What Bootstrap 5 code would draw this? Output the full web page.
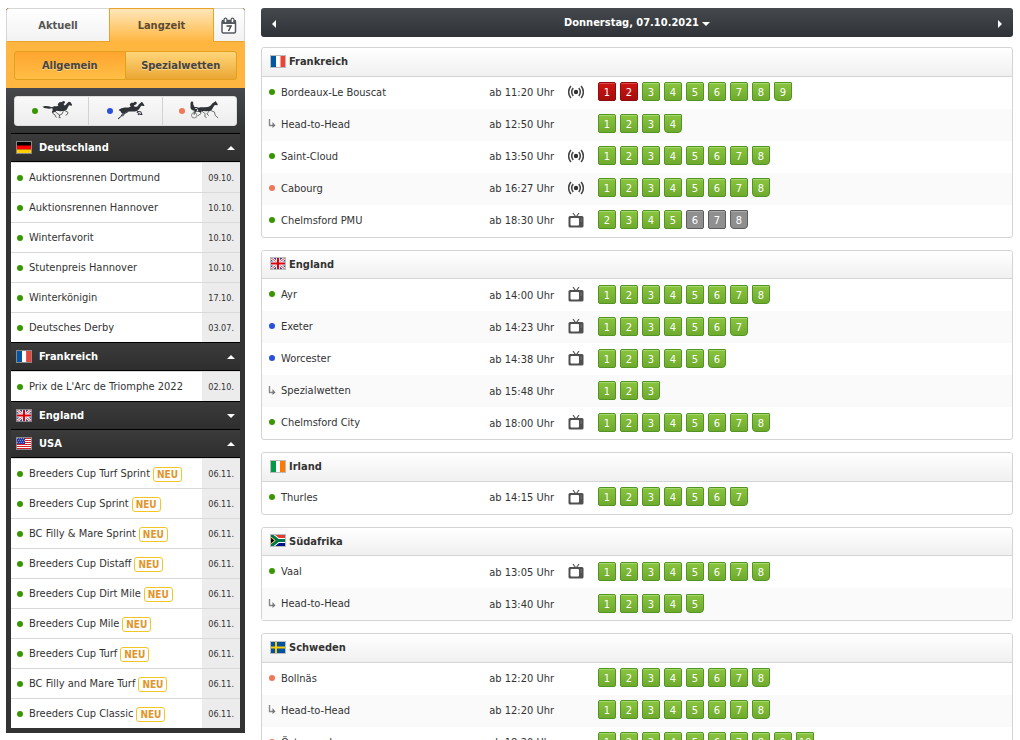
<!DOCTYPE html>
<html lang="de">
<head>
<meta charset="utf-8">
<meta name="viewport" content="width=device-width, initial-scale=1">
<title>Langzeitwetten und Rennkalender</title>
<link href="https://cdn.jsdelivr.net/npm/bootstrap@5.3.0/dist/css/bootstrap.min.css" rel="stylesheet">
<style>
  body { font-family: "DejaVu Sans Condensed", "DejaVu Sans", sans-serif; font-size: 11px; line-height: 1.5; color: #333; background: #fff; }
  a { color: inherit; text-decoration: none; }
  svg { display: block; flex: none; }
  .page { padding: 8px 7px 8px 6px; gap: 16px; }

  /* sidebar */
  .sidebar { flex: 0 0 239px; background: #333; border-radius: 3px 3px 0 0; padding-bottom: 5px; }
  .tabs { height: 34px; background: #ffb640; border-radius: 4px 4px 0 0; overflow: hidden; }
  .tab { border: 1px solid #d6d6d6; border-bottom-color: #e9a32b; background: linear-gradient(#fff, #f2f2f2); color: #555; font-weight: bold; padding: 2px 0 0; }
  .tab-first { flex: 1 1 103px; border-radius: 3px 0 0 0; border-right: 0; }
  .tab-on { flex: 1 1 105px; border-color: #e9a32b; border-bottom: 0; background: linear-gradient(#ffe7ba, #ffb640); color: #5b4b33; }
  .tab-cal { flex: 0 0 31px; border-left: 0; border-radius: 0 3px 0 0; padding: 0; }
  .subnav { background: #ffb640; padding: 9px 8px 8px; }
  .subnav button { height: 29px; border: 1px solid #e3a01f; font-weight: bold; color: #444; text-shadow: 0 1px 0 #ffd88a; padding: 2px 0 0; }
  .sub-on { background: linear-gradient(#ffa52f, #ffbe45); border-radius: 3px 0 0 3px; }
  .sub-off { background: linear-gradient(#ffd67a, #eba634); border-radius: 0 3px 3px 0; border-left: 0 !important; }
  .filter-wrap { background: linear-gradient(#45484c, #333 45px); padding: 8px 8px 7px; }
  .filter { height: 30px; border: 1px solid #ddd; border-radius: 3px; background: linear-gradient(#f9f9f9, #ededed); overflow: hidden; }
  .filter button { flex: 1 1 0; background: none; border: 0; padding: 0 0 2px; gap: 4px; color: #333; }
  .filter button + button { border-left: 1px solid #d2d2d2; }
  .filter .dot { margin-top: 2px; }
  .countries { margin: 0 5px; }
  .country { height: 28px; width: 100%; border: 0; border-top: 1px solid #000; background: linear-gradient(#3b3b3b, #2e2e2e); color: #fff; font-weight: bold; padding: 0 5px; gap: 7px; text-align: left; }
  .country span { padding-top: 2px; }
  .bets { border-top: 1px solid #000; }
  .bet { height: 30px; border-top: 1px solid #d9d9d9; background: #fff; padding-left: 6px; color: #333; }
  .bet-name { padding: 2px 0 0 6px; }
  .bet-date { flex: 0 0 38px; align-self: stretch; background: #ececec; font-size: 9px; padding: 2px 6px 0 0; }
  .neu { border: 1px solid #f3c623; border-radius: 3px; color: #e0962a; font-size: 10px; font-weight: bold; line-height: 13px; padding: 0 3px; margin: 1px 0 0 3px; }

  /* coloured discipline dots */
  .dot { width: 6px; height: 6px; border-radius: 50%; flex: none; display: block; }
  .flat { background: #389700; }
  .jump { background: #2850dc; }
  .trot { background: #f07858; }
  .flag { outline: 1px solid #888; outline-offset: -1px; }
  .panel-head .flag { outline-color: #bbb; margin-bottom: 2px; }

  /* main column */
  .datebar { height: 29px; background: linear-gradient(#45484c, #2f3237); border-radius: 3px; color: #fff; font-weight: bold; margin-bottom: 10px; }
  .datebar button { background: none; border: 0; color: inherit; font-weight: bold; padding: 2px 11px 0; height: 29px; gap: 3px; }
  .panel { border: 1px solid #d4d4d4; border-radius: 3px; margin-bottom: 12px; }
  .panel-head { padding: 6px 8px 5px; background: linear-gradient(#fff, #f0f0f0); border-bottom: 1px solid #d4d4d4; font-size: 11px; font-weight: bold; line-height: 1.5; margin: 0; gap: 3px; border-radius: 3px 3px 0 0; }
  .races { width: 100%; table-layout: fixed; border-collapse: collapse; }
  .races tr { height: 32px; }
  .races tr:nth-child(even) { background: #fafafa; }
  .races td { padding: 0 0 2px; vertical-align: middle; white-space: nowrap; }
  .races .race-time { padding: 2px 0 0; }
  .c-name { width: 192px; }
  .c-time { width: 100px; }
  .c-icon { width: 46px; }
  .races td:nth-child(3) { padding-right: 2px; }
  .race-name { padding-left: 7px; gap: 6px; }
  .race-name span + span, .race-name svg + span { padding-top: 3px; }
  .race-name svg { margin-right: -1px; margin-left: -1px; }
  .nums { gap: 4px; margin-left: -2px; }
  .num { width: 18px; height: 19px; border: 1px solid #539524; border-radius: 2px; background: linear-gradient(#8ac440, #6faa2e); box-shadow: inset 0 1px 0 #a5d86a; color: #fff; line-height: 19px; text-align: center; }
  .num:last-child { border-radius: 1px 1px 4px 4px; }
  .num.done { background: linear-gradient(#cf1512, #a50d0d); border-color: #8c0d0d; box-shadow: inset 0 1px 0 #dc4a48; }
  .num.off { background: #8f8f8f; border-color: #5c5c5c; box-shadow: inset 0 1px 0 #aaa; }
</style>
</head>
<body>

<svg width="0" height="0" class="position-absolute" aria-hidden="true">
  <symbol id="f-de" viewBox="0 0 16 13"><path fill="#000" d="M0 0h16v5H0z"/><path fill="#f00" d="M0 4.500h16v4H0z"/><path fill="#ffce00" d="M0 8.500h16V13H0z"/></symbol>
  <symbol id="f-fr" viewBox="0 0 16 13"><path fill="#0055a4" d="M0 0h6v13H0z"/><path fill="#fff" d="M6 0h4.500v13H6z"/><path fill="#ef4135" d="M10.500 0H16v13h-5.500z"/></symbol>
  <symbol id="f-ie" viewBox="0 0 16 13"><path fill="#009a49" d="M0 0h6v13H0z"/><path fill="#fff" d="M6 0h4v13H6z"/><path fill="#ff7900" d="M10 0h6v13h-6z"/></symbol>
  <symbol id="f-gb" viewBox="0 0 16 13"><path fill="#1b4a96" d="M0 0h16v13H0z"/><path stroke="#fff" stroke-width="2.600" d="M0 0l16 13M16 0L0 13"/><path stroke="#d8000c" stroke-width=".8" d="M0 0l16 13M16 0L0 13"/><path stroke="#fff" stroke-width="4" d="M8 0v13M0 6.500h16"/><path stroke="#d8000c" stroke-width="2.200" d="M8 0v13M0 6.500h16"/></symbol>
  <symbol id="f-us" viewBox="0 0 16 13"><path fill="#fff" d="M0 0h16v13H0z"/><path stroke="#d8202c" d="M0 1.500h16M0 3.500h16M0 5.500h16M0 7.500h16M0 9.500h16M0 11.500h16"/><path fill="#2a3a9c" d="M0 0h9v7H0z"/><path stroke="#aab2e0" stroke-width=".7" stroke-dasharray="1 1" d="M1 1.500h8M2 3.500h7M1 5.500h8"/></symbol>
  <symbol id="f-za" viewBox="0 0 16 13"><path fill="#e03c31" d="M0 0h16v5H0z"/><path fill="#001489" d="M0 8h16v5H0z"/><path fill="none" stroke="#fff" stroke-width="5" d="M0 0l8 6.500h8M0 13l8-6.500"/><path fill="none" stroke="#007749" stroke-width="3" d="M0 0l8 6.500h8M0 13l8-6.500"/><path fill="#000" stroke="#ffb81c" d="M0 2.500l5 4-5 4z"/></symbol>
  <symbol id="f-se" viewBox="0 0 16 13"><path fill="#0052a0" d="M0 0h16v13H0z"/><path fill="#ffcc00" d="M5 0h2v13H5zM0 5.500h16v2H0z"/></symbol>

  <symbol id="i-live" viewBox="0 0 16 14"><circle cx="8" cy="7" r="2.200" fill="#333"/><path fill="none" stroke="#444" stroke-width="1.500" d="M5.200 3q-3 4 0 8M10.800 3q3 4 0 8M2.900 1q-4.600 6 0 12M13.100 1q4.600 6 0 12"/></symbol>
  <symbol id="i-tv" viewBox="0 0 16 16"><path fill="none" stroke="#555" stroke-width="1.200" d="M5 1l2.500 3.500M11 1L8.500 4.500"/><rect x=".5" y="4" width="15" height="11.500" rx="1.500" fill="#505050"/><rect x="2.500" y="6" width="8.500" height="7.500" rx="1" fill="#fff"/><path stroke="#888" stroke-width=".8" d="M12.500 7h1.500M12.500 9h1.500"/></symbol>
  <symbol id="i-sub" viewBox="0 0 8 9"><path fill="none" stroke="#8a8a8a" stroke-width="1.400" d="M1.500 0v6.500H5"/><path fill="#777" d="M4.500 3l3 3.500-3 2.500z"/></symbol>

  <symbol id="h-flat" viewBox="98 20 90 54"><path fill="#2f3338" d="M99 37l9-2 10 1 10 3 6-3 9 0 4-2-2-4 5-6 8-1 3-3 5 1 1 5-4 2 1 5 4 0 6-7 5-4 4 1 6 9-3 2-7-1-4 7-3 6-8 4-12 1-10-2-5 3-6 3-3-2 2-6-1-5-10 1-14-2z"/><path fill="none" stroke="#2f3338" stroke-width="2.200" d="M132 50l-3 6 8 6 4 8M137 50l6 7 8 5-2 8 5 0M162 51l-4 8-8 4M165 48l11 6-2 6-5 3"/></symbol>
  <symbol id="h-jump" viewBox="88 20 82 56"><path fill="#2f3338" d="M94 45l7-4 10-2 11 0 6-3-3-5 4-6 8 0 3-3 5 1 1 5-4 3-5 2 3 4 7 0 5-7 7-6 3-1 7 10-3 2-7-1-5 8-5 6-8 3-13 0-11 1-8 3-8 0-3-5-5-3z"/><path fill="none" stroke="#2f3338" stroke-width="3" d="M112 51l-8 7-4 7-9 8M120 51l-10 6-6 8M146 50l12 2 3 8-6 0M146 52l8 6-5 3"/></symbol>
  <symbol id="h-trot" viewBox="304 20 92 54"><path fill="#2f3338" d="M308 25l4-4 4 2 0 7 4 8 10 0 0 2-9 2 7 7-3 2-13-4-4-6zM329 41l8-2 12 0 11-1 7-3 7-8 6-4 4-3 1 3 5 7-2 3-7-1-5 7-4 7-6 4-11 1-10-1-7 3-6 0-2-9-5 5-3 9-2-1 2-10z"/><circle cx="319" cy="63" r="8" fill="none" stroke="#555" stroke-width="2"/><path fill="none" stroke="#2f3338" stroke-width="2" d="M319 62l0-12 22 3M337 50l2 8-10 7M343 51l9 7-1 9 5 3M364 50l-7 9 6 5M367 48l13 5 2 10 9 8"/></symbol>
  <symbol id="i-cal" viewBox="0 0 16 17"><rect x="1" y="3.500" width="13.500" height="12.500" rx="1.500" fill="#fff" stroke="#565a60" stroke-width="1.500"/><path fill="#565a60" d="M1 3h14v4H1z"/><path stroke="#565a60" stroke-width="4" stroke-linecap="round" d="M4.500 2.500v2M11.500 2.500v2"/><path stroke="#fff" stroke-width="1.600" stroke-linecap="round" d="M4.500 2.500v2M11.500 2.500v2"/><path fill="none" stroke="#444" stroke-width="1.500" d="M5.500 9h4.500L7.500 14"/></symbol>
  <symbol id="a-up" viewBox="0 0 8 4"><path fill="#fff" d="M0 4l4-4 4 4z"/></symbol>
  <symbol id="a-down" viewBox="0 0 8 4"><path fill="#fff" d="M0 0h8L4 4z"/></symbol>
</svg>

<div class="page d-flex align-items-start">
  <aside class="sidebar">
    <nav class="tabs d-flex">
      <button type="button" class="tab tab-first">Aktuell</button>
      <button type="button" class="tab tab-on">Langzeit</button>
      <button type="button" class="tab tab-cal d-flex align-items-center justify-content-center" aria-label="Kalender"><svg width="16" height="17"><use href="#i-cal"/></svg></button>
    </nav>
    <div class="subnav d-flex">
      <button type="button" class="sub-on w-50">Allgemein</button>
      <button type="button" class="sub-off w-50">Spezialwetten</button>
    </div>
    <div class="filter-wrap">
      <div class="filter d-flex">
        <button type="button" class="d-flex align-items-center justify-content-center" aria-label="Flachrennen"><span class="dot flat"></span><svg width="30" height="18"><use href="#h-flat"/></svg></button>
        <button type="button" class="d-flex align-items-center justify-content-center" aria-label="Hindernisrennen"><span class="dot jump"></span><svg width="28" height="19"><use href="#h-jump"/></svg></button>
        <button type="button" class="d-flex align-items-center justify-content-center" aria-label="Trabrennen"><span class="dot trot"></span><svg width="31" height="18"><use href="#h-trot"/></svg></button>
      </div>
    </div>
    <div class="countries" id="countries"></div>
  </aside>

  <main class="flex-grow-1">
    <div class="datebar d-flex justify-content-between align-items-center">
      <button type="button" aria-label="Vorheriger Tag"><svg width="4" height="8"><path fill="#fff" d="M4 0v8L0 4z"/></svg></button>
      <button type="button" class="d-flex align-items-center">Donnerstag, 07.10.2021 <svg width="8" height="4"><use href="#a-down"/></svg></button>
      <button type="button" aria-label="Nächster Tag"><svg width="4" height="8"><path fill="#fff" d="M0 0v8l4-4z"/></svg></button>
    </div>
    <div id="panels"></div>
  </main>
</div>

<script>
  const bets = [
    ['de', 'Deutschland', [['Auktionsrennen Dortmund', '09.10.'], ['Auktionsrennen Hannover', '10.10.'], ['Winterfavorit', '10.10.'], ['Stutenpreis Hannover', '10.10.'], ['Winterkönigin', '17.10.'], ['Deutsches Derby', '03.07.']]],
    ['fr', 'Frankreich', [["Prix de L'Arc de Triomphe 2022", '02.10.']]],
    ['gb', 'England', []],
    ['us', 'USA', ['Breeders Cup Turf Sprint', 'Breeders Cup Sprint', 'BC Filly & Mare Sprint', 'Breeders Cup Distaff', 'Breeders Cup Dirt Mile', 'Breeders Cup Mile', 'Breeders Cup Turf', 'BC Filly and Mare Turf', 'Breeders Cup Classic'].map(n => [n.replace('&', '&amp;'), '06.11.', true])]
  ];
  // meeting: discipline, name, start, broadcast, first race, last race, finished up to, closed from
  const days = [
    ['fr', 'Frankreich', [['flat', 'Bordeaux-Le Bouscat', '11:20', 'live', 1, 9, 2], ['sub', 'Head-to-Head', '12:50', '', 1, 4], ['flat', 'Saint-Cloud', '13:50', 'live', 1, 8], ['trot', 'Cabourg', '16:27', 'live', 1, 8], ['flat', 'Chelmsford PMU', '18:30', 'tv', 2, 8, 0, 6]]],
    ['gb', 'England', [['flat', 'Ayr', '14:00', 'tv', 1, 8], ['jump', 'Exeter', '14:23', 'tv', 1, 7], ['jump', 'Worcester', '14:38', 'tv', 1, 6], ['sub', 'Spezialwetten', '15:48', '', 1, 3], ['flat', 'Chelmsford City', '18:00', 'tv', 1, 8]]],
    ['ie', 'Irland', [['flat', 'Thurles', '14:15', 'tv', 1, 7]]],
    ['za', 'Südafrika', [['flat', 'Vaal', '13:05', 'tv', 1, 8], ['sub', 'Head-to-Head', '13:40', '', 1, 5]]],
    ['se', 'Schweden', [['trot', 'Bollnäs', '12:20', '', 1, 8], ['sub', 'Head-to-Head', '12:20', '', 1, 8], ['trot', 'Östersund', '18:20', '', 1, 10]]]
  ];
  const icon = (id, w, h, cls = '') => `<svg class="${cls}" width="${w}" height="${h}"><use href="#${id}"/></svg>`;

  document.getElementById('countries').innerHTML = bets.map(([flag, land, list]) => `
    <button type="button" class="country d-flex align-items-center" aria-expanded="${list.length > 0}">
      ${icon('f-' + flag, 16, 13, 'flag')}<span class="flex-grow-1">${land}</span>${icon(list.length ? 'a-up' : 'a-down', 8, 4)}
    </button>` + (list.length ? `<div class="bets">${list.map(([name, date, neu]) => `
      <a href="#" class="bet d-flex align-items-center"><span class="dot flat"></span><span class="bet-name text-nowrap">${name}</span>${neu ? '<span class="neu">NEU</span>' : ''}<span class="bet-date ms-auto d-flex align-items-center justify-content-end">${date}</span></a>`).join('')}</div>` : '')).join('');

  document.getElementById('panels').innerHTML = days.map(([flag, land, rows]) => `
    <section class="panel">
      <h2 class="panel-head d-flex align-items-center">${icon('f-' + flag, 16, 13, 'flag')}${land}</h2>
      <table class="races"><colgroup><col class="c-name"><col class="c-time"><col class="c-icon"><col></colgroup><tbody>${rows.map(([kind, name, time, tv, from, to, done = 0, off = 99]) => {
        let nums = '';
        for (let n = from; n <= to; n++) nums += `<a href="#" class="num${n <= done ? ' done' : n >= off ? ' off' : ''}">${n}</a>`;
        return `<tr>
          <td><a href="#" class="race-name d-flex align-items-center">${kind === 'sub' ? icon('i-sub', 8, 9) : `<span class="dot ${kind}"></span>`}<span>${name}</span></a></td>
          <td class="race-time text-end">ab ${time} Uhr</td>
          <td>${tv ? icon('i-' + tv, 16, tv === 'tv' ? 16 : 14, 'mx-auto') : ''}</td>
          <td><div class="nums d-flex">${nums}</div></td></tr>`;
      }).join('')}</tbody></table>
    </section>`).join('');
</script>
<script src="https://cdn.jsdelivr.net/npm/bootstrap@5.3.0/dist/js/bootstrap.bundle.min.js"></script>
</body>
</html>
